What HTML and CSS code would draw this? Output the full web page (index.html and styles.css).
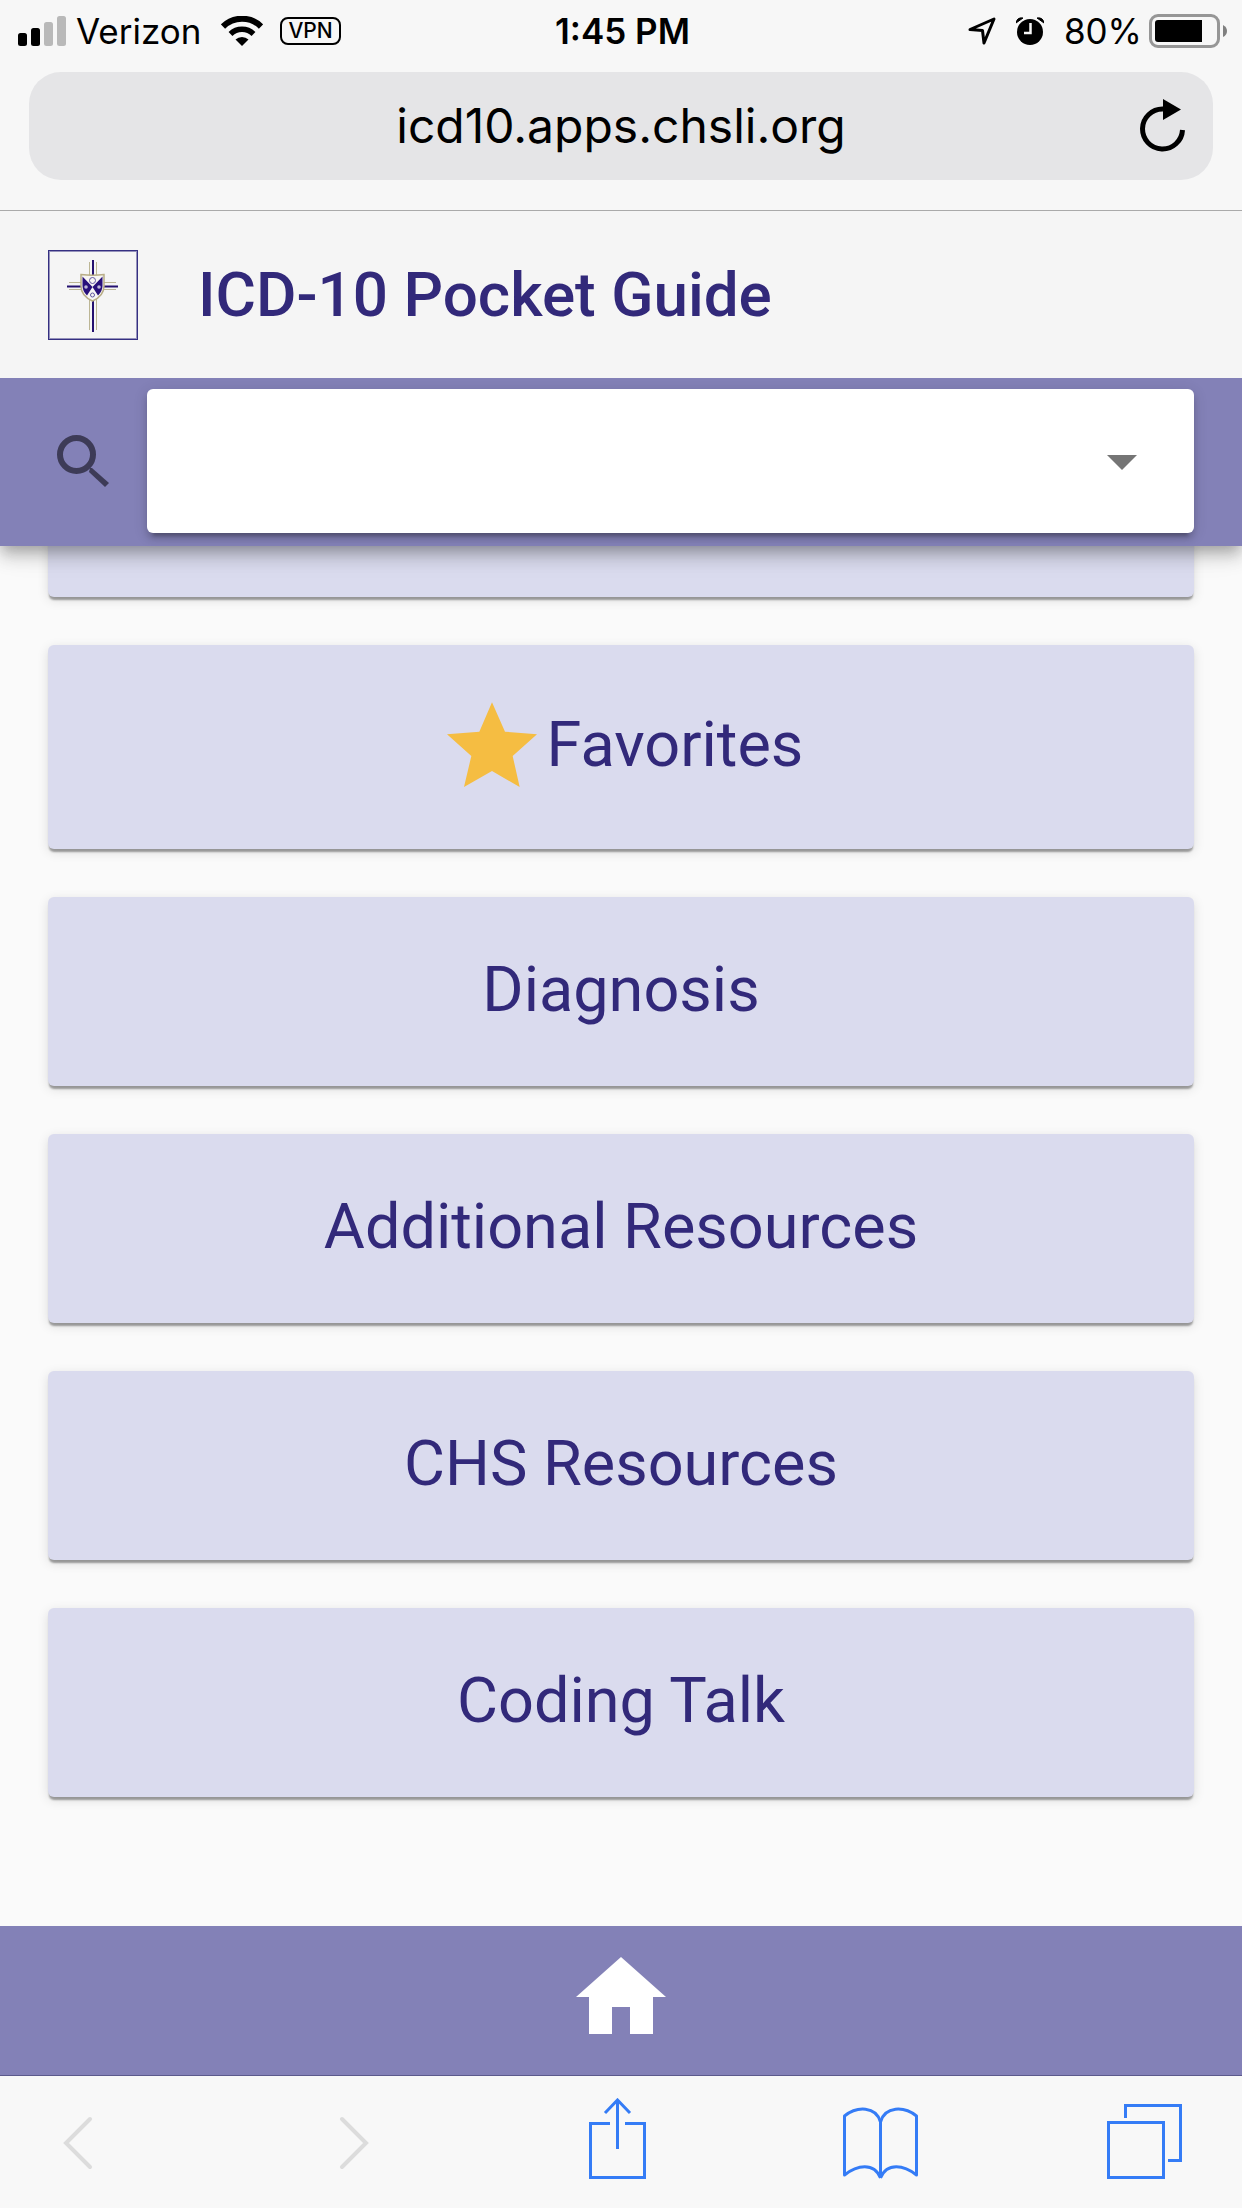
FILE: index.html
```html
<!DOCTYPE html>
<html lang="en">
<head>
  <meta charset="utf-8">
  <meta name="viewport" content="width=device-width, initial-scale=1">
  <title>ICD-10 Pocket Guide</title>
  <link rel="stylesheet" href="styles.css">
</head>
<body>
  <div class="browser-top">
    <div class="status">
      <div class="status-side">
        <svg class="signal" width="48" height="30" viewBox="0 0 48 30" aria-hidden="true">
          <rect x="0" y="17" width="9" height="13" rx="2.5"/>
          <rect x="13" y="12" width="9" height="18" rx="2.5"/>
          <rect x="26" y="6" width="9" height="24" rx="2.5" fill="#b9b9b9"/>
          <rect x="39" y="0" width="9" height="30" rx="2.5" fill="#b9b9b9"/>
        </svg>
        <span class="carrier">Verizon</span>
        <svg class="wifi" width="42" height="30" viewBox="0 0 42 30" aria-hidden="true">
          <path d="M2 10.500 A27 27 0 0 1 40 10.500" fill="none" stroke="#000" stroke-width="6"/>
          <path d="M9.500 18 A16.500 16.500 0 0 1 32.500 18" fill="none" stroke="#000" stroke-width="5.500"/>
          <path d="M14.500 23.500 A9.500 9.500 0 0 1 27.500 23.500 L21 30 Z"/>
        </svg>
        <span class="vpn">VPN</span>
      </div>
      <span class="clock">1:45 PM</span>
      <div class="status-side status-right">
        <svg class="location" width="28" height="28" viewBox="0 0 28 28" aria-hidden="true">
          <path d="M2 12.500 L26 2 L16 26 L14.500 13.500 Z" fill="none" stroke="#000" stroke-width="3" stroke-linejoin="round"/>
        </svg>
        <svg class="alarm" width="28" height="28" viewBox="0 0 28 28" aria-hidden="true">
          <circle cx="14" cy="15" r="13"/>
          <path d="M0 6 Q1 0 7 1 Z M28 6 Q27 0 21 1 Z" stroke="#000" stroke-width="1"/>
          <path d="M14.500 6 V16 H8" fill="none" stroke="#f7f7f7" stroke-width="2.500"/>
        </svg>
        <span class="percent">80%</span>
        <svg class="battery" width="78" height="34" viewBox="0 0 78 34" aria-hidden="true">
          <rect x="1.500" y="1.500" width="68" height="31" rx="7.500" fill="none" stroke="#969696" stroke-width="3"/>
          <path d="M53 6 V28 H9 Q6 28 6 25 V9 Q6 6 9 6 Z"/>
          <path d="M74 11 Q78 13 78 17 Q78 21 74 23 Z" fill="#808080"/>
        </svg>
      </div>
    </div>
    <form class="address">
      <input class="address-input" type="text" value="icd10.apps.chsli.org" aria-label="Address">
      <button class="reload" type="button" aria-label="Reload">
        <svg width="46" height="54" viewBox="0 0 46 54" aria-hidden="true">
          <path d="M23 10 A20 20 0 1 0 42.500 31" fill="none" stroke="#000" stroke-width="5"/>
          <path d="M23 0 L41 10.500 L23 21 Z"/>
        </svg>
      </button>
    </form>
  </div>

  <header class="app-header">
    <div class="title-row">
      <svg class="logo" width="90" height="90" viewBox="0 0 90 90" aria-hidden="true">
        <rect x="1" y="1" width="88" height="88" fill="none" stroke="#353082" stroke-opacity="0.5" stroke-width="2"/>
        <rect x="0.500" y="0.500" width="89" height="89" fill="none" stroke="#353082"/>
        <g fill="none" stroke="#bcb695">
          <path d="M41.500 12 V80 M48.500 12 V80 M21 32.500 H68 M21 39.500 H68"/>
        </g>
        <path d="M45 10 V82 M19 36.500 H70" stroke="#24106f" stroke-width="2"/>
        <path d="M33 24.500 Q45 26 56 24.500 V36 Q56 46 44.500 51 Q33 46 33 36 Z" fill="#f7f5f4" stroke="#b8ad86" stroke-width="1.500"/>
        <path d="M34.500 26.500 L44.500 37 L39 45.500 Q34.500 41 34.500 36 Z M54.500 26.500 L44.500 37 L50 45.500 Q54.500 41 54.500 36 Z" fill="#28107a"/>
        <g fill="none" stroke="#6256a0">
          <circle cx="44.500" cy="30.500" r="3"/>
          <circle cx="44.500" cy="45" r="2"/>
        </g>
        <circle cx="38" cy="37" r="1.800" fill="#bdb6d8"/>
        <circle cx="51" cy="37" r="1.800" fill="#bdb6d8"/>
      </svg>
      <h1 class="title">ICD-10 Pocket Guide</h1>
    </div>
    <div class="search-row">
      <label class="search-label" for="search" aria-label="Search">
        <svg width="54" height="54" viewBox="0 0 54 54" aria-hidden="true">
          <circle cx="20.500" cy="20.500" r="16.500" fill="none" stroke="#3d3b57" stroke-width="6"/>
          <path d="M34 34 L36 34 L53 49 L49 53 L33 38 Z" fill="#3d3b57"/>
        </svg>
      </label>
      <div class="search-box">
        <select class="search-select" id="search"><option value=""></option></select>
        <svg class="arrow" width="30" height="15" viewBox="0 0 30 15" aria-hidden="true">
          <path d="M0 0 H30 L15 15 Z" fill="#757575"/>
        </svg>
      </div>
    </div>
  </header>

  <main class="content">
    <button class="card" type="button" aria-hidden="true" tabindex="-1"></button>
    <button class="card card-favorites" type="button">
      <svg width="90" height="86" viewBox="0 0 270 256" aria-hidden="true">
        <path d="M135 0 L174 88 L270 96 L197 161 L218 254 L135 206 L51 254 L73 161 L0 96 L97 88 Z" fill="#f5bd42"/>
      </svg>
      Favorites
    </button>
    <button class="card" type="button">Diagnosis</button>
    <button class="card" type="button">Additional Resources</button>
    <button class="card" type="button">CHS Resources</button>
    <button class="card" type="button">Coding Talk</button>
  </main>

  <footer class="app-footer">
    <button class="home" type="button" aria-label="Home">
      <svg width="90" height="77" viewBox="0 0 90 77" aria-hidden="true">
        <path d="M45 0 L90 40 H77 V77 H54 V50 H36 V77 H13 V40 H0 Z" fill="#fff"/>
      </svg>
    </button>
  </footer>

  <nav class="toolbar" aria-label="Browser">
    <button class="tool tool-back" type="button" aria-label="Back" disabled>
      <svg width="30" height="88" viewBox="0 0 30 88" aria-hidden="true">
        <path d="M27 21 L3 45 L27 69" fill="none" stroke="#dcdcdc" stroke-width="4" stroke-linecap="round"/>
      </svg>
    </button>
    <button class="tool" type="button" aria-label="Forward" disabled>
      <svg width="30" height="88" viewBox="0 0 30 88" aria-hidden="true">
        <path d="M3 21 L27 45 L3 69" fill="none" stroke="#dcdcdc" stroke-width="4" stroke-linecap="round"/>
      </svg>
    </button>
    <button class="tool" type="button" aria-label="Share">
      <svg width="57" height="88" viewBox="0 0 57 88" aria-hidden="true">
        <g fill="none" stroke="#357cf6" stroke-width="3">
          <path d="M21 25.500 H1.500 V79.500 H55.500 V25.500 H36"/>
          <path d="M28.500 51 V2 M16 15 L28.500 2 L41 15"/>
        </g>
      </svg>
    </button>
    <button class="tool" type="button" aria-label="Bookmarks">
      <svg width="75" height="88" viewBox="0 0 75 88" aria-hidden="true">
        <g fill="none" stroke="#357cf6" stroke-width="3" stroke-linejoin="round">
          <path d="M37.500 80 V24 C33 8 14 8 1.500 18 V77 C14 67 31 64 37.500 80"/>
          <path d="M37.500 24 C42 8 61 8 73.500 18 V77 C61 67 44 64 37.500 80"/>
        </g>
      </svg>
    </button>
    <button class="tool" type="button" aria-label="Tabs">
      <svg width="75" height="88" viewBox="0 0 75 88" aria-hidden="true">
        <g fill="none" stroke="#357cf6" stroke-width="3">
          <rect x="1.500" y="24.500" width="55" height="55"/>
          <path d="M18.500 20 V7.500 H73.500 V62.500 H61"/>
        </g>
      </svg>
    </button>
  </nav>
</body>
</html>
```
FILE: styles.css
```css
* {
  box-sizing: border-box;
}

body {
  display: flex;
  flex-direction: column;
  height: 100vh;
  margin: 0;
  background: #fafafa;
  font-family: Roboto, "Liberation Sans", sans-serif;
  color: #32297a;
}

button,
input,
select {
  margin: 0;
  padding: 0;
  border: 0;
  background: none;
  color: inherit;
  font: inherit;
}

svg {
  display: block;
  flex: none;
}

/* Browser chrome */

.browser-top {
  position: relative;
  z-index: 2;
  flex: none;
  padding-bottom: 30px;
  border-bottom: 1px solid #aaa;
  background: #f7f7f7;
  color: #000;
  font-family: Inter, "Liberation Sans", sans-serif;
}

.status {
  display: grid;
  grid-template-columns: 1fr auto 1fr;
  align-items: center;
  height: 72px;
  padding: 0 15px 11px 18px;
  font-size: 35px;
  line-height: 40px;
}

.status-side {
  display: flex;
  align-items: center;
}

.status-right {
  justify-content: flex-end;
}

.carrier {
  margin: 0 20px 0 10px;
}

.vpn {
  margin-left: 17px;
  padding: 0 6px;
  border: 2px solid #000;
  border-radius: 8px;
  font-size: 21px;
  font-weight: 500;
  line-height: 24px;
}

.clock {
  font-weight: 600;
}

.alarm {
  margin: 0 20px;
}

.percent {
  margin-right: 7px;
}

.address {
  display: flex;
  align-items: center;
  height: 108px;
  margin: 0 29px;
  padding: 0 27px 0 73px;
  border-radius: 32px;
  background: #e5e5e7;
}

.address-input {
  flex: 1;
  min-width: 0;
  font-size: 48px;
  line-height: 60px;
  text-align: center;
}

/* App header */

.app-header {
  position: relative;
  z-index: 1;
  flex: none;
  box-shadow: 0 6px 12px -3px rgba(0, 0, 0, 0.2),
    0 12px 15px 0 rgba(0, 0, 0, 0.14),
    0 3px 30px 0 rgba(0, 0, 0, 0.12);
}

.title-row {
  display: flex;
  align-items: center;
  gap: 60px;
  height: 167px;
  padding: 0 48px;
  background: #f5f5f5;
}

.title {
  margin: 0;
  font-size: 62px;
  font-weight: 500;
  line-height: 72px;
}

.search-row {
  display: flex;
  align-items: center;
  height: 168px;
  padding: 0 48px 2px 56px;
  background: #8381b7;
}

.search-label {
  width: 91px;
}

.search-box {
  position: relative;
  flex: 1;
  height: 144px;
  border-radius: 6px;
  background: #fff;
  box-shadow: 0 9px 3px -6px rgba(0, 0, 0, 0.2),
    0 6px 6px 0 rgba(0, 0, 0, 0.14),
    0 3px 15px 0 rgba(0, 0, 0, 0.12);
}

.search-select {
  display: block;
  width: 100%;
  height: 100%;
  padding: 0 96px 0 36px;
  appearance: none;
  font-size: 48px;
}

.arrow {
  position: absolute;
  top: 66px;
  right: 57px;
  pointer-events: none;
}

/* Menu */

.content {
  display: flex;
  flex: 1;
  flex-direction: column;
  justify-content: flex-end;
  gap: 48px;
  min-height: 0;
  padding: 0 48px 129px;
  overflow: hidden;
}

.card {
  display: flex;
  flex: none;
  align-items: center;
  justify-content: center;
  gap: 10px;
  height: 189px;
  padding-bottom: 4px;
  border-radius: 6px;
  background: #dadbee;
  box-shadow: 0 4px 2px -1px rgba(0, 0, 0, 0.35),
    0 3px 12px 0 rgba(0, 0, 0, 0.12);
  font-size: 63px;
  line-height: 72px;
}

.card-favorites {
  height: 204px;
  padding-left: 8px;
}

/* App footer */

.app-footer {
  display: flex;
  flex: none;
  justify-content: center;
  height: 150px;
  padding-bottom: 10px;
  border-bottom: 1px solid #5c5a8c;
  background: #8381b7;
}

/* Browser toolbar */

.toolbar {
  display: flex;
  flex: none;
  justify-content: space-between;
  height: 132px;
  padding: 0 56px 0 24px;
  background: #f8f8f8;
}

.tool {
  display: flex;
  align-items: center;
  justify-content: center;
  width: 84px;
}

.tool-back {
  width: 108px;
}
```
